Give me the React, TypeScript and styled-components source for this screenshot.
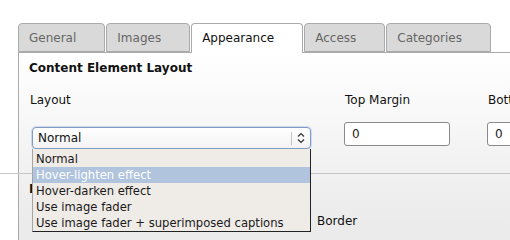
import React from 'react';
import styled, { createGlobalStyle } from 'styled-components';

const GlobalStyle = createGlobalStyle`
  html, body {
    margin: 0;
    height: 100%;
  }
  body {
    background: #fff;
    font-family: 'DejaVu Sans', Verdana, sans-serif;
    font-size: 12px;
    color: #111;
    overflow: hidden;
  }
`;

const Page = styled.div`
  padding: 23px 0 0 18px;
`;

const TabBar = styled.ul`
  display: flex;
  align-items: flex-end;
  gap: 1px;
  height: 29px;
  margin: 0;
  padding: 0;
  list-style: none;
`;

const Tab = styled.li<{ $active?: boolean }>`
  box-sizing: border-box;
  height: ${(p) => (p.$active ? '30px' : '29px')};
  margin-bottom: ${(p) => (p.$active ? '-1px' : '0')};
  padding: 0 28px 0 10px;
  border: 1px solid #aaa;
  border-bottom: ${(p) => (p.$active ? 'none' : '1px solid #aaa')};
  border-radius: 4px 4px 0 0;
  background: ${(p) => (p.$active ? '#fff' : '#d9d9d9')};
  color: ${(p) => (p.$active ? '#111' : '#666')};
  line-height: 28px;
  white-space: nowrap;
  position: relative;
  z-index: 1;
`;

const Panel = styled.div`
  min-height: calc(100vh - 53px);
  padding: 8px 0 0 10px;
  border-top: 1px solid #aaa;
  border-left: 1px solid #aaa;
  background: linear-gradient(#fff, #ebebeb 170px);
`;

const Heading = styled.div<{ $top?: number }>`
  margin-top: ${(p) => p.$top ?? 0}px;
  font-weight: bold;
  line-height: 15px;
  white-space: nowrap;
`;

const FieldGrid = styled.div<{ $cols: string; $top: number }>`
  display: grid;
  grid-template-columns: ${(p) => p.$cols};
  margin-top: ${(p) => p.$top}px;
  align-items: start;
`;

const Field = styled.div`
  display: flex;
  flex-direction: column;
  align-items: flex-start;
  min-height: 15px;
`;

const Label = styled.label`
  padding-left: 1px;
  line-height: 15px;
  white-space: nowrap;
`;

const SelectWrap = styled.div`
  position: relative;
  margin: 19px 0 0 3px;
  width: 279px;
`;

const SelectBox = styled.div`
  box-sizing: border-box;
  display: flex;
  align-items: center;
  height: 22px;
  border: 1px solid #7f9bc6;
  border-radius: 4px;
  background: linear-gradient(#fff, #f3f3f3);
  box-shadow: 0 0 0 1px rgba(140, 170, 215, 0.35);
`;

const SelectValue = styled.span`
  flex: 1;
  padding-left: 5px;
  line-height: 20px;
`;

const ArrowPart = styled.span`
  display: flex;
  align-items: center;
  justify-content: center;
  width: 18px;
  height: 13px;
  border-left: 1px solid #c4c4c4;
`;

const OptionList = styled.ul`
  position: absolute;
  top: 100%;
  left: 0;
  right: 0;
  z-index: 5;
  margin: 0;
  padding: 2px 0 0;
  list-style: none;
  background: #efebe7;
  border-left: 1px solid #a5a5a5;
  border-right: 1px solid #222;
  border-bottom: 1px solid #222;
  font-size: 11.6px;
`;

const OptionItem = styled.li<{ $selected?: boolean }>`
  height: 16px;
  padding-left: 3px;
  line-height: 16px;
  white-space: nowrap;
  background: ${(p) => (p.$selected ? '#b0c4de' : 'transparent')};
  color: ${(p) => (p.$selected ? '#fff' : '#1a1a1a')};
`;

const TextInput = styled.input`
  box-sizing: border-box;
  width: 106px;
  height: 24px;
  margin-top: 14px;
  padding: 0 7px;
  border: 1px solid #8a8a8a;
  border-radius: 3px;
  background: #fff;
  font-family: inherit;
  font-size: 12px;
  color: #222;
  outline: none;
`;

const Divider = styled.hr`
  height: 1px;
  margin: 24px 0 0 -29px;
  border: none;
  background: #c6c6c6;
`;

const tabs = ['General', 'Images', 'Appearance', 'Access', 'Categories'];
const options = [
  'Normal',
  'Hover-lighten effect',
  'Hover-darken effect',
  'Use image fader',
  'Use image fader + superimposed captions',
];

const UpDown = () => (
  <svg width="8" height="12" viewBox="0 0 8 12">
    <path d="M1 4.5 L4 1.5 L7 4.5 M1 7.5 L4 10.5 L7 7.5" fill="none" stroke="#333" strokeWidth="1.2" />
  </svg>
);

export default function App() {
  return (
    <>
      <GlobalStyle />
      <Page>
        <TabBar>
          {tabs.map((t) => (
            <Tab key={t} $active={t === 'Appearance'}>
              {t}
            </Tab>
          ))}
        </TabBar>
        <Panel>
          <Heading>Content Element Layout</Heading>
          <FieldGrid $cols="315px 143px 1fr" $top={17}>
            <Field>
              <Label>Layout</Label>
              <SelectWrap>
                <SelectBox>
                  <SelectValue>Normal</SelectValue>
                  <ArrowPart>
                    <UpDown />
                  </ArrowPart>
                </SelectBox>
                <OptionList>
                  {options.map((o, i) => (
                    <OptionItem key={o} $selected={i === 1}>
                      {o}
                    </OptionItem>
                  ))}
                </OptionList>
              </SelectWrap>
            </Field>
            <Field>
              <Label>Top Margin</Label>
              <TextInput defaultValue="0" />
            </Field>
            <Field>
              <Label>Bottom Margin</Label>
              <TextInput defaultValue="0" />
            </Field>
          </FieldGrid>
          <Divider />
          <Heading $top={8}>Image Options</Heading>
          <FieldGrid $cols="287px 1fr" $top={17}>
            <Field />
            <Field>
              <Label>Border</Label>
            </Field>
          </FieldGrid>
        </Panel>
      </Page>
    </>
  );
}
